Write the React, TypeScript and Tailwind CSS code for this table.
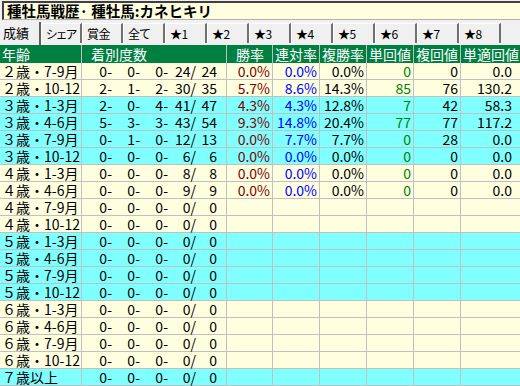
import React from 'react';

type Row = {
  age: string;
  cyan: boolean;
  counts: string[];
  vals?: string[];
};

const rows: Row[] = [
  { age: '２歳・7-9月', cyan: false, counts: ['0-', '0-', '0-', '24/', '24'], vals: ['0.0%', '0.0%', '0.0%', '0', '0', '0.0'] },
  { age: '２歳・10-12', cyan: false, counts: ['2-', '1-', '2-', '30/', '35'], vals: ['5.7%', '8.6%', '14.3%', '85', '76', '130.2'] },
  { age: '３歳・1-3月', cyan: true, counts: ['2-', '0-', '4-', '41/', '47'], vals: ['4.3%', '4.3%', '12.8%', '7', '42', '58.3'] },
  { age: '３歳・4-6月', cyan: true, counts: ['5-', '3-', '3-', '43/', '54'], vals: ['9.3%', '14.8%', '20.4%', '77', '77', '117.2'] },
  { age: '３歳・7-9月', cyan: true, counts: ['0-', '1-', '0-', '12/', '13'], vals: ['0.0%', '7.7%', '7.7%', '0', '28', '0.0'] },
  { age: '３歳・10-12', cyan: true, counts: ['0-', '0-', '0-', '6/', '6'], vals: ['0.0%', '0.0%', '0.0%', '0', '0', '0.0'] },
  { age: '４歳・1-3月', cyan: false, counts: ['0-', '0-', '0-', '8/', '8'], vals: ['0.0%', '0.0%', '0.0%', '0', '0', '0.0'] },
  { age: '４歳・4-6月', cyan: false, counts: ['0-', '0-', '0-', '9/', '9'], vals: ['0.0%', '0.0%', '0.0%', '0', '0', '0.0'] },
  { age: '４歳・7-9月', cyan: false, counts: ['0-', '0-', '0-', '0/', '0'] },
  { age: '４歳・10-12', cyan: false, counts: ['0-', '0-', '0-', '0/', '0'] },
  { age: '５歳・1-3月', cyan: true, counts: ['0-', '0-', '0-', '0/', '0'] },
  { age: '５歳・4-6月', cyan: true, counts: ['0-', '0-', '0-', '0/', '0'] },
  { age: '５歳・7-9月', cyan: true, counts: ['0-', '0-', '0-', '0/', '0'] },
  { age: '５歳・10-12', cyan: true, counts: ['0-', '0-', '0-', '0/', '0'] },
  { age: '６歳・1-3月', cyan: false, counts: ['0-', '0-', '0-', '0/', '0'] },
  { age: '６歳・4-6月', cyan: false, counts: ['0-', '0-', '0-', '0/', '0'] },
  { age: '６歳・7-9月', cyan: false, counts: ['0-', '0-', '0-', '0/', '0'] },
  { age: '６歳・10-12', cyan: false, counts: ['0-', '0-', '0-', '0/', '0'] },
  { age: '７歳以上', cyan: true, counts: ['0-', '0-', '0-', '0/', '0'] },
];

const tabs = ['成績', 'シェア', '賞金', '全て', '★1', '★2', '★3', '★4', '★5', '★6', '★7', '★8'];

// widths of the five pieces of 着別度数, right aligned
const countW = ['w-[30px]', 'w-[28px]', 'w-[28px]', 'w-[28px]', 'w-[21px]'];
const valW = ['w-[46px]', 'w-[47px]', 'w-[47px]', 'w-[47px]', 'w-[47px]', 'flex-1'];
const valColor = ['text-[#800000]', 'text-[#0000ff]', 'text-black', 'text-[#008000]', 'text-black', 'text-black'];

export default function App() {
  return (
    <div className="w-[520px] h-[386px] overflow-hidden bg-[#f0f0f0] text-black font-['Noto_Sans_CJK_JP',sans-serif]">
      <div className="pt-[1px] pl-[2px]">
        <div className="h-[19px] bg-[#ffffe0] border-t-2 border-l-2 border-[#404040] border-b border-b-[#b0b0b0] flex items-center pl-[3px] text-[14.5px] font-bold leading-none whitespace-nowrap">
          種牡馬戦歴· 種牡馬:カネヒキリ
        </div>
      </div>

      <div className="h-[25px] flex items-end text-[12px] leading-none whitespace-nowrap">
        {tabs.map((t, i) =>
          i === 0 ? (
            <div key={t} className="w-[41px] h-[23px] flex items-center pl-[3px] pb-[2px] text-[13px] border-r-2 border-[#606060]">
              {t}
            </div>
          ) : (
            <div
              key={t}
              className={`${i < 3 ? 'w-[41px]' : 'w-[42px]'} h-[20px] mb-[2px] flex items-center pl-[4px] overflow-hidden border-l border-t border-white border-r-2 border-r-[#707070] tracking-[-0.5px] [font-feature-settings:'palt']`}
            >
              {t}
            </div>
          )
        )}
      </div>

      <div className="h-[18px] flex bg-[#008040] text-white text-[14px] leading-none whitespace-nowrap">
        <div className="w-[82px] border-r border-[#c0c0c0] flex items-center pl-[2px]">年齢</div>
        <div className="w-[145px] border-r border-[#c0c0c0] flex items-center pl-[9px]">着別度数</div>
        <div className="w-[46px] border-r border-[#c0c0c0] flex items-center pl-[9px]">勝率</div>
        <div className="w-[47px] border-r border-[#c0c0c0] flex items-center pl-[2px]">連対率</div>
        <div className="w-[47px] border-r border-[#c0c0c0] flex items-center pl-[2px]">複勝率</div>
        <div className="w-[47px] border-r border-[#c0c0c0] flex items-center pl-[2px]">単回値</div>
        <div className="w-[47px] border-r border-[#c0c0c0] flex items-center pl-[2px]">複回値</div>
        <div className="flex-1 flex items-center pl-[2px]">単適回値</div>
      </div>

      {rows.map((r) => (
        <div
          key={r.age}
          className={`h-[17px] flex border-b border-[#c0c0c0] text-[14px] leading-[16px] whitespace-nowrap ${r.cyan ? 'bg-[#80ffff]' : 'bg-[#ffffe0]'}`}
        >
          <div className="w-[82px] border-r border-[#c0c0c0] flex items-center pl-[2px]">{r.age}</div>
          <div className="w-[145px] border-r border-[#c0c0c0] flex items-center">
            {r.counts.map((c, i) => (
              <span key={i} className={`${countW[i]} text-right`}>
                {c}
              </span>
            ))}
          </div>
          {valW.map((w, i) => (
            <div
              key={i}
              className={`${w} ${i < 5 ? 'border-r border-[#c0c0c0] pr-[2px]' : 'pr-[8px]'} flex items-center justify-end ${valColor[i]}`}
            >
              {r.vals ? r.vals[i] : ''}
            </div>
          ))}
        </div>
      ))}
    </div>
  );
}
